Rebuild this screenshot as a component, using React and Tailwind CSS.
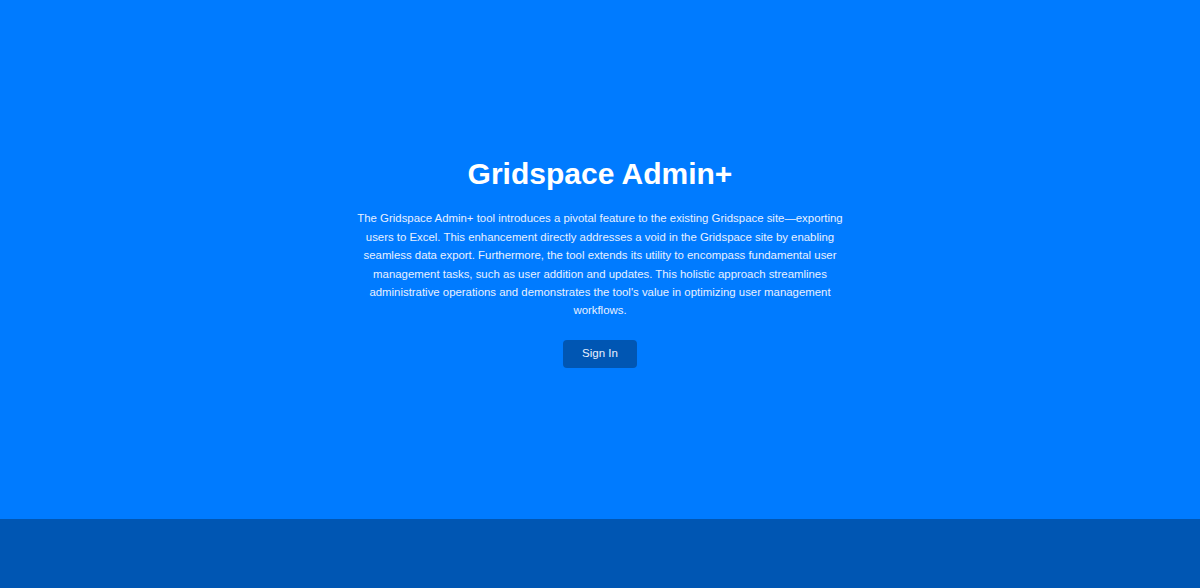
export default function App() {
    return (
        <div className="min-h-[588px] flex flex-col bg-[#007bff] font-['Liberation_Sans',Arial,sans-serif] text-white">
            <main className="h-[519px] flex flex-col items-center justify-center text-center px-4 pt-[5px]">
                <h1 className="text-[30px] font-bold leading-[36px] mb-[17px]">Gridspace Admin+</h1>
                <p className="max-w-[490px] text-[11.4px] leading-[18.4px] text-[#e8f0ff]">
                    The Gridspace Admin+ tool introduces a pivotal feature to the existing Gridspace site—exporting users to Excel. This enhancement directly addresses a void in the Gridspace site by enabling seamless data export. Furthermore, the tool extends its utility to encompass fundamental user management tasks, such as user addition and updates. This holistic approach streamlines administrative operations and demonstrates the tool's value in optimizing user management workflows.
                </p>
                <button
                    type="button"
                    className="mt-5 h-[28px] w-[74px] rounded bg-[#0056b3] text-[11.5px] text-[#e8f0ff]"
                >
                    Sign In
                </button>
            </main>
            <footer className="flex-1 bg-[#0056b3]" />
        </div>
    );
}
